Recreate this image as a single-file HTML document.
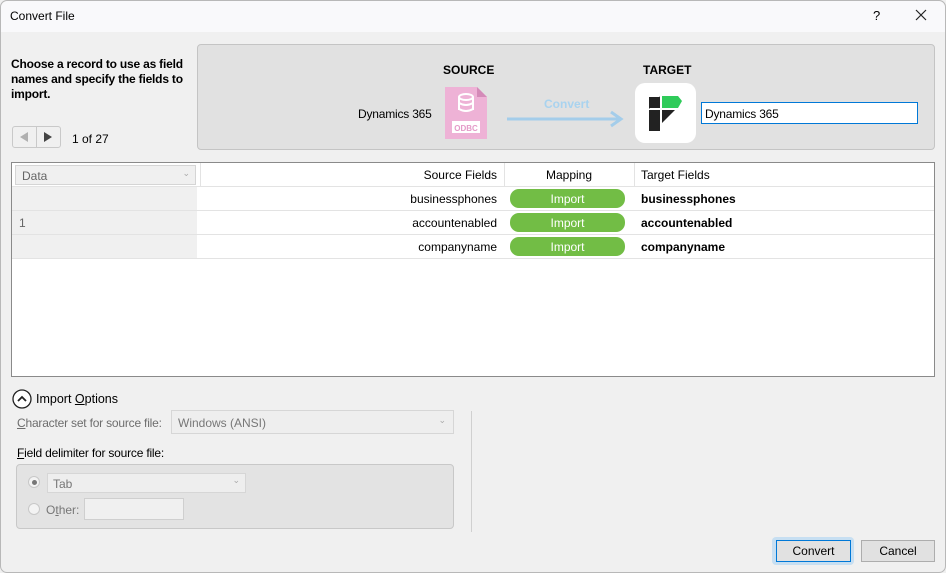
<!DOCTYPE html>
<html><head><style>
*{box-sizing:border-box;margin:0;padding:0}
body{width:946px;height:573px;background:#f0f0f0;font-family:"Liberation Sans",sans-serif;font-size:12px;color:#000;position:relative;overflow:hidden}
.a{position:absolute}
.win{left:0;top:0;width:946px;height:573px;border:1px solid #b8b8b8;border-radius:7px}
.title{left:1px;top:1px;width:944px;height:31px;background:#f9f9fb;border-radius:7px 7px 0 0}
.pill{position:absolute;left:510px;width:115px;height:19px;background:#72bd45;border-radius:9px;color:#fff;text-align:center;line-height:20px}
.row{position:absolute;left:1px;width:922px;height:24px;border-bottom:1px solid #e3e3e3}
.dc{position:absolute;left:0;top:0;width:185px;height:23px;background:#f0f0f0;color:#666;padding:5px 0 0 7px}
.sf{position:absolute;right:437px;top:5px}
.tf{position:absolute;left:629px;top:5px;font-weight:bold}
.btn{position:absolute;height:22px;border:1px solid #adadad;background:#e1e1e1;text-align:center;line-height:20px}
</style></head><body>
<div class="a win"></div>
<div class="a title"></div>
<div class="a" style="left:10px;top:9px">Convert File</div>
<div class="a" style="left:873px;top:8px;font-size:13px">?</div>
<svg class="a" style="left:915px;top:9px" width="12" height="12"><path d="M1 1L11 11M11 1L1 11" stroke="#222" stroke-width="1.2"/></svg>

<div class="a" style="left:11px;top:57px;width:185px;font-weight:bold;line-height:15px;letter-spacing:-0.2px">Choose a record to use as field names and specify the fields to import.</div>
<div class="a" style="left:12px;top:126px;width:49px;height:22px;border:1px solid #c9c9c9;border-radius:3px;background:#f0f0f0"></div>
<div class="a" style="left:36px;top:127px;width:1px;height:20px;background:#c9c9c9"></div>
<svg class="a" style="left:18px;top:131px" width="12" height="12"><path d="M10 1L10 11L2 6Z" fill="#b0b0b0"/></svg>
<svg class="a" style="left:42px;top:131px" width="12" height="12"><path d="M2 1L2 11L10 6Z" fill="#444"/></svg>
<div class="a" style="left:72px;top:132px">1 of 27</div>

<div class="a" style="left:197px;top:44px;width:738px;height:106px;background:#e1e1e1;border:1px solid #c4c4c4;border-radius:4px"></div>
<div class="a" style="left:443px;top:63px;font-weight:bold">SOURCE</div>
<div class="a" style="left:643px;top:63px;font-weight:bold">TARGET</div>
<div class="a" style="left:358px;top:107px;letter-spacing:-0.2px">Dynamics 365</div>
<svg class="a" style="left:444px;top:86px" width="44" height="54"><path d="M1 1H33L43 11V53H1Z" fill="#eeb2d6"/><path d="M33 1L43 11H33Z" fill="#d48ab8"/><rect x="8" y="35" width="28" height="12" fill="#fff"/><text x="22" y="45" font-size="8" font-weight="bold" fill="#e49ac8" text-anchor="middle" font-family="Liberation Sans">ODBC</text><g fill="none" stroke="#fff" stroke-width="2"><ellipse cx="22" cy="11" rx="7" ry="3"/><path d="M15 11V24M29 11V24M15 17Q22 21 29 17M15 23Q22 27 29 23"/></g></svg>
<div class="a" style="left:544px;top:97px;color:#a9d3ef;font-weight:bold">Convert</div>
<svg class="a" style="left:505px;top:110px" width="120" height="18"><path d="M2 9H116M106 2L116 9L106 16" stroke="#a4cdea" stroke-width="3" fill="none"/></svg>
<div class="a" style="left:635px;top:83px;width:61px;height:60px;background:#fff;border-radius:10px"></div>
<svg class="a" style="left:648px;top:95px" width="36" height="38"><path d="M1 13L12 1V13Z" fill="#222"/><path d="M1 1H12L1 13Z" fill="#fff"/><rect x="1" y="1" width="11" height="12" fill="none"/><path d="M1 13L12 1H1Z" fill="#fff"/><path d="M1 1V13L12 1Z" fill="none"/><path d="M1 13V2L11 1Z" fill="none"/><path d="M1 14V1H4L1 14Z" fill="none"/><path d="M12 1L12 13H1Z" fill="none"/><path d="M1 14V2L12 2Z" fill="none"/><path d="M1 14L12 1V14Z" fill="none"/><path d="M1 2L12 2L1 14Z" fill="#222"/><path d="M14 1H30L34 6L30 13H14Z" fill="#2fcb5a"/><path d="M1 15H12V36H1Z" fill="#222"/><path d="M14 15H27L14 28Z" fill="#222"/></svg>
<div class="a" style="left:701px;top:102px;width:217px;height:22px;background:#fff;border:1px solid #0078d7;padding:4px 3px;letter-spacing:-0.2px">Dynamics 365</div>

<div class="a" style="left:11px;top:162px;width:924px;height:215px;background:#fff;border:1px solid #8a8a8a">
 <div class="a" style="left:0;top:0;width:922px;height:24px;border-bottom:1px solid #e3e3e3"></div>
 <div class="a" style="left:3px;top:2px;width:181px;height:20px;border:1px solid #d5d5d5;background:#f0f0f0;color:#666;padding:3px 6px">Data<span style="position:absolute;right:5px;top:2px;font-size:9px;color:#aaa">&#8964;</span></div>
 <div class="a" style="left:188px;top:0;width:1px;height:24px;background:#e3e3e3"></div>
 <div class="a" style="left:492px;top:0;width:1px;height:24px;background:#e3e3e3"></div>
 <div class="a" style="left:622px;top:0;width:1px;height:24px;background:#e3e3e3"></div>
 <div class="a" style="right:437px;top:5px">Source Fields</div>
 <div class="a" style="left:534px;top:5px">Mapping</div>
 <div class="a" style="left:629px;top:5px">Target Fields</div>
 <div class="row" style="top:24px;left:0"><div class="dc"></div><div class="sf">businessphones</div><div class="pill" style="left:498px;top:2px">Import</div><div class="tf">businessphones</div></div>
 <div class="row" style="top:48px;left:0"><div class="dc">1</div><div class="sf">accountenabled</div><div class="pill" style="left:498px;top:2px">Import</div><div class="tf">accountenabled</div></div>
 <div class="row" style="top:72px;left:0"><div class="dc"></div><div class="sf">companyname</div><div class="pill" style="left:498px;top:2px">Import</div><div class="tf">companyname</div></div>
</div>

<svg class="a" style="left:12px;top:389px" width="20" height="20"><circle cx="10" cy="10" r="9" fill="#fff" stroke="#222" stroke-width="1.3"/><path d="M6 12L10 8L14 12" stroke="#222" stroke-width="1.8" fill="none"/></svg>
<div class="a" style="left:36px;top:392px;font-size:12.5px">Import <u>O</u>ptions</div>
<div class="a" style="left:17px;top:416px;color:#6d6d6d;letter-spacing:-0.2px"><u>C</u>haracter set for source file:</div>
<div class="a" style="left:171px;top:410px;width:283px;height:24px;border:1px solid #d6d6d6;background:#eeeeee;color:#777;padding:5px 6px">Windows (ANSI)<span style="position:absolute;right:7px;top:4px;font-size:9px;color:#aaa">&#8964;</span></div>
<div class="a" style="left:17px;top:446px;letter-spacing:-0.2px"><u>F</u>ield delimiter for source file:</div>
<div class="a" style="left:16px;top:464px;width:438px;height:65px;background:#e3e3e3;border:1px solid #c8c8c8;border-radius:4px"></div>
<div class="a" style="left:28px;top:476px;width:12px;height:12px;border-radius:50%;border:1px solid #c8c8c8;background:#f3f3f3"></div>
<div class="a" style="left:32px;top:480px;width:5px;height:5px;border-radius:50%;background:#777"></div>
<div class="a" style="left:47px;top:473px;width:199px;height:20px;border:1px solid #d6d6d6;background:#eeeeee;color:#777;padding:3px 5px">Tab<span style="position:absolute;right:5px;top:1px;font-size:9px;color:#aaa">&#8964;</span></div>
<div class="a" style="left:28px;top:503px;width:12px;height:12px;border-radius:50%;border:1px solid #c8c8c8;background:#f3f3f3"></div>
<div class="a" style="left:46px;top:503px;color:#777">O<u>t</u>her:</div>
<div class="a" style="left:84px;top:498px;width:100px;height:22px;border:1px solid #cfcfcf;background:#f0f0f0"></div>
<div class="a" style="left:471px;top:411px;width:1px;height:121px;background:#d0d0d0"></div>

<div class="a" style="left:772px;top:537px;width:82px;height:28px;border-radius:4px;background:#c7dff2"></div>
<div class="btn" style="left:776px;top:540px;width:75px;border-color:#0078d7">Convert</div>
<div class="btn" style="left:861px;top:540px;width:74px">Cancel</div>
</body></html>
